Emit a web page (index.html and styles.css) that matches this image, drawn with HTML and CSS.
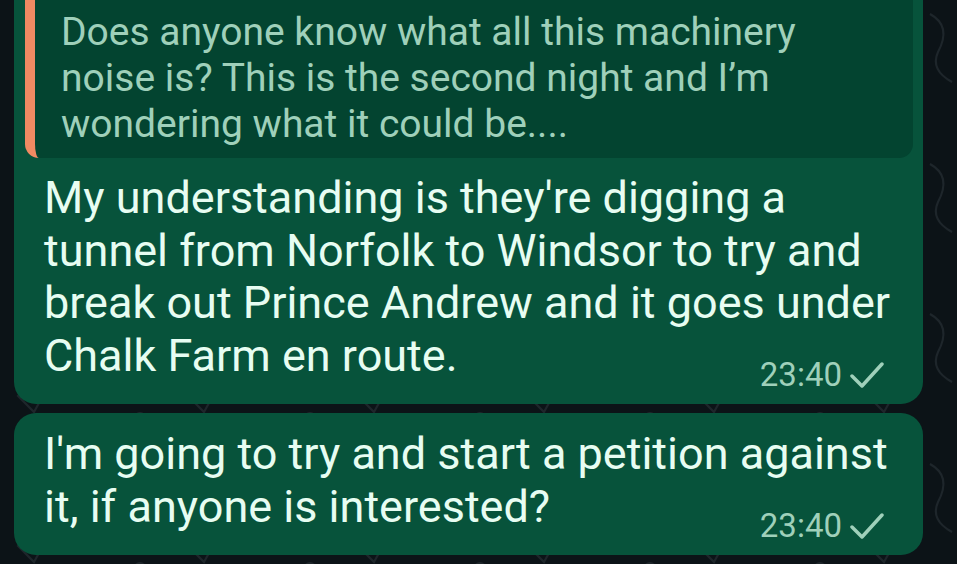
FILE: index.html
```html
<!DOCTYPE html>
<html lang="en">
<head>
  <meta charset="UTF-8" />
  <meta name="viewport" content="width=device-width, initial-scale=1.0"/>
  <title>Chat</title>
  <link rel="stylesheet" href="styles.css">
</head>
<body>

<!-- Chat thread -->
<div class="chat">
  <div class="bubble first">
    <div class="quote">
      <p>Does anyone know what all this machinery noise is? This is the second night and I’m wondering what it could be....</p>
    </div>
    <div class="msg">
      <p class="text">My understanding is they're digging a tunnel from Norfolk to Windsor to try and break out Prince Andrew and it goes under Chalk Farm en route.</p>
      <div class="meta">
        <span>23:40</span>
        <svg class="tick" viewBox="0 0 34 28"><polyline points="2,15 12,25 32,3" /></svg>
      </div>
    </div>
  </div>

  <div class="bubble second">
    <div class="msg">
      <p class="text">I'm going to try and start a petition against it, if anyone is interested?</p>
      <div class="meta">
        <span>23:40</span>
        <svg class="tick" viewBox="0 0 34 28"><polyline points="2,15 12,25 32,3" /></svg>
      </div>
    </div>
  </div>
</div>

</body>
</html>
```

FILE: styles.css
```css
:root {
  --bg: #0c1317;
  --bubble: #07533b;
  --quote: #034430;
  --text: #e7fdf2;
  --muted: #9fd0ba;
  --accent: #f08a62;
}

* {
  margin: 0;
  padding: 0;
  box-sizing: border-box;
}

body {
  font-family: Roboto, 'Noto Sans', sans-serif;
  background-color: var(--bg);
  background-image: url("data:image/svg+xml,%3Csvg xmlns='http://www.w3.org/2000/svg' width='170' height='150'%3E%3Cg fill='none' stroke='%231e262b' stroke-width='2'%3E%3Ccircle cx='24' cy='30' r='8'/%3E%3Cpath d='M80 14 q22 12 8 38 q-8 18 14 30'/%3E%3Cpath d='M18 96 l12 -14 l14 12 l-10 18 z'/%3E%3Ccircle cx='140' cy='118' r='5'/%3E%3Cpath d='M120 40 q14 -10 26 4 t20 20'/%3E%3C/g%3E%3C/svg%3E");
  color: var(--text);
  height: 100vh;
  overflow: hidden;
}

.chat {
  display: flex;
  flex-direction: column;
  gap: 9px;
  padding: 0 34px 0 14px;
}

.bubble {
  background-color: var(--bubble);
  border-radius: 22px;
  padding: 15px 24px 9px 30px;
}

/* top of the first bubble is cut off by the screen */
.bubble.first {
  border-radius: 0 0 22px 22px;
  padding-top: 0;
}

.quote {
  background-color: var(--quote);
  border-left: 10px solid var(--accent);
  border-radius: 0 0 14px 14px;
  margin: 0 -14px 14px -19px;
  padding: 9px 60px 11px 26px;
}

.quote p {
  font-size: 39px;
  line-height: 46px;
  color: var(--muted);
}

.text {
  font-size: 45px;
  line-height: 52.5px;
  color: var(--text);
}

.meta {
  display: flex;
  justify-content: flex-end;
  align-items: center;
  gap: 8px;
  margin-top: -27px;
  margin-right: 15px;
  font-size: 33px;
  line-height: 40px;
  color: var(--muted);
}

.tick {
  width: 34px;
  height: 28px;
}

.tick polyline {
  fill: none;
  stroke: var(--muted);
  stroke-width: 3.5;
  stroke-linecap: round;
  stroke-linejoin: round;
}
```
